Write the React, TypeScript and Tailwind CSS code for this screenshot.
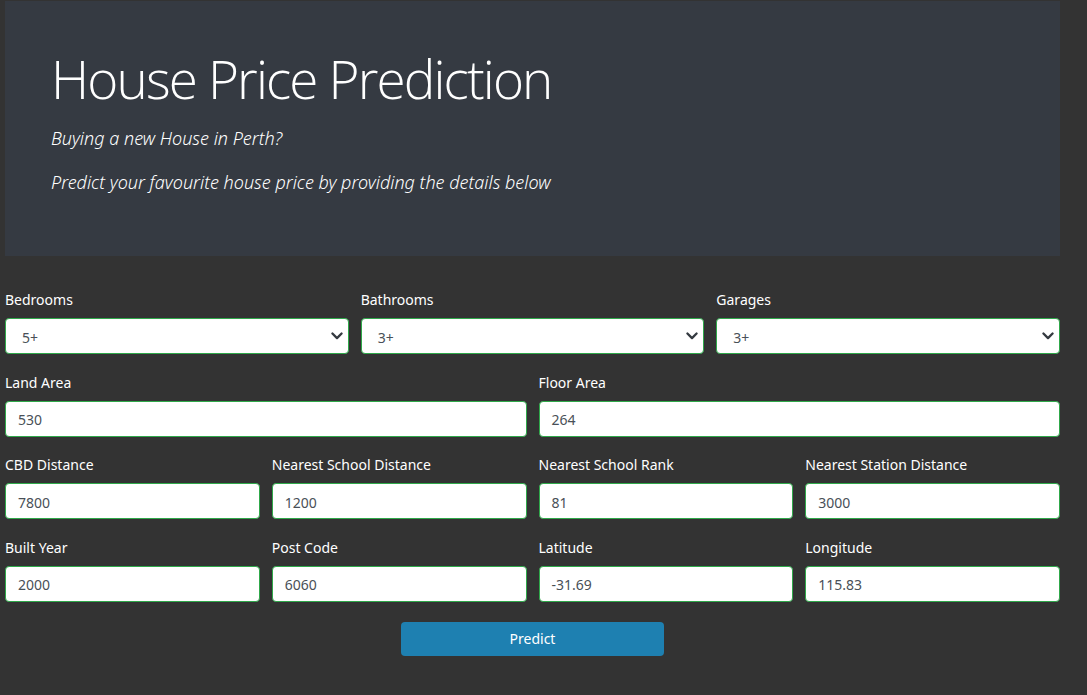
import React from "react";

const Chevron = () => (
  <svg width="14" height="10" viewBox="0 0 16 12" className="pointer-events-none absolute right-[4px] top-1/2 -translate-y-1/2">
    <path d="M2.5 3l5.5 5.5 5.5-5.5" fill="none" stroke="#343a40" strokeWidth="2.8" strokeLinecap="round" strokeLinejoin="round" />
  </svg>
);

const Field = ({ label, value, select }: { label: string; value: string; select?: boolean }) => (
  <div className="flex flex-col">
    <label className="h-[21px] leading-[21px] text-[14px] text-white mb-[8px]">{label}</label>
    <div className="relative h-[36px] bg-white border border-[#2fa84a] rounded-[4px] flex items-center pt-[2px]">
      <span className={`${select ? "pl-[16px]" : "pl-[12px]"} text-[14px] text-[#495057]`}>{value}</span>
      {select && <Chevron />}
    </div>
  </div>
);

export default function App() {
  return (
    <div className="w-[1087px] h-[695px] bg-[#333333] overflow-hidden" style={{ fontFamily: '"Noto Sans", "Open Sans", sans-serif' }}>
      <div className="ml-[5px] mt-[1px] w-[1055px] h-[255px] bg-[#353a42] pl-[46px] pt-[42px]">
        <h1 className="text-[53px] leading-[72px] font-light text-white tracking-[-1.85px]" style={{ fontFamily: '"Open Sans", sans-serif' }}>
          House Price Prediction
        </h1>
        <p className="mt-[10px] text-[18px] italic font-light text-white leading-[26px]">Buying a new House in Perth?</p>
        <p className="mt-[18px] text-[18px] italic font-light text-white leading-[26px]">Predict your favourite house price by providing the details below</p>
      </div>
      <div className="ml-[5px] w-[1055px] mt-[33px] flex flex-col gap-[17.5px]">
        <div className="grid grid-cols-3 gap-x-[12px]">
          <Field label="Bedrooms" value="5+" select />
          <Field label="Bathrooms" value="3+" select />
          <Field label="Garages" value="3+" select />
        </div>
        <div className="grid grid-cols-2 gap-x-[12px]">
          <Field label="Land Area" value="530" />
          <Field label="Floor Area" value="264" />
        </div>
        <div className="grid grid-cols-4 gap-x-[12px]">
          <Field label="CBD Distance" value="7800" />
          <Field label="Nearest School Distance" value="1200" />
          <Field label="Nearest School Rank" value="81" />
          <Field label="Nearest Station Distance" value="3000" />
        </div>
        <div className="grid grid-cols-4 gap-x-[12px]">
          <Field label="Built Year" value="2000" />
          <Field label="Post Code" value="6060" />
          <Field label="Latitude" value="-31.69" />
          <Field label="Longitude" value="115.83" />
        </div>
      </div>
      <div className="flex justify-center mt-[20px] ml-[5px] w-[1055px]">
        <button className="w-[263px] h-[34px] bg-[#1e80b1] rounded-[4px] text-white text-[14px]">Predict</button>
      </div>
    </div>
  );
}
